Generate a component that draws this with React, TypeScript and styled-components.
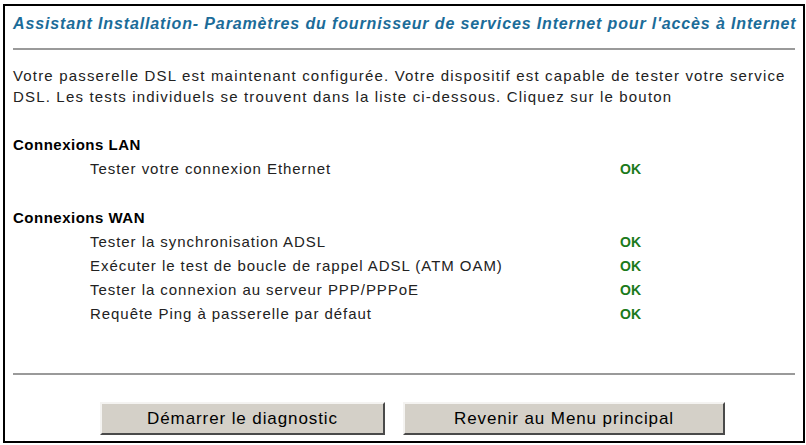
import styled, { createGlobalStyle } from 'styled-components'

const GlobalStyle = createGlobalStyle`
  html, body {
    margin: 0;
    padding: 0;
    background: #fff;
  }
  body {
    font-family: 'Liberation Sans', Arial, sans-serif;
  }
`

const Frame = styled.div`
  box-sizing: border-box;
  margin: 4px 0 0 3px;
  width: 802px;
  height: 439px;
  border: 2px solid #000;
  padding: 0 8px;
  background: #fff;
`

const Title = styled.h1`
  margin: 9px 0 0;
  font-size: 16px;
  line-height: 18px;
  letter-spacing: 0.86px;
  font-weight: bold;
  font-style: italic;
  color: #1b6c99;
  white-space: nowrap;
`

const Rule = styled.hr<{ $top: number }>`
  margin: ${(p) => p.$top}px 0 0;
  border: none;
  height: 2px;
  background: #9a9a9a;
`

const Intro = styled.p`
  margin: 15px 0 0;
  font-size: 15px;
  line-height: 21px;
  letter-spacing: 1.17px;
  color: #222;
  white-space: nowrap;
`

const Section = styled.section<{ $top: number }>`
  margin-top: ${(p) => p.$top}px;
`

const Heading = styled.h2`
  margin: 0;
  font-size: 15px;
  line-height: 24px;
  letter-spacing: 0.5px;
  font-weight: bold;
  color: #000;
`

const TestRow = styled.div`
  display: grid;
  grid-template-columns: 77px 530px auto;
  font-size: 15px;
  line-height: 24px;
  color: #222;
`

const Label = styled.span`
  grid-column: 2;
  letter-spacing: 0.95px;
  white-space: nowrap;
`

const Status = styled.span`
  grid-column: 3;
  font-size: 14px;
  font-weight: bold;
  color: #1b7a1b;
`

const Actions = styled.div`
  display: flex;
  gap: 18px;
  margin: 27px 0 0 87px;
`

const Button = styled.button<{ $width: number }>`
  box-sizing: border-box;
  width: ${(p) => p.$width}px;
  height: 33px;
  font-family: 'Liberation Sans', Arial, sans-serif;
  font-size: 17px;
  letter-spacing: 0.9px;
  color: #000;
  background: #d4d0c8;
  border: 2px solid;
  border-color: #f4f3f1 #4a4a4a #4a4a4a #f4f3f1;
  padding: 0;
  cursor: pointer;
`

const lanTests = ['Tester votre connexion Ethernet']

const wanTests = [
  'Tester la synchronisation ADSL',
  'Exécuter le test de boucle de rappel ADSL (ATM OAM)',
  'Tester la connexion au serveur PPP/PPPoE',
  'Requête Ping à passerelle par défaut',
]

const App = () => (
  <>
    <GlobalStyle />
    <Frame>
      <Title>
        Assistant Installation- Paramètres du fournisseur de services Internet pour l'accès à Internet
      </Title>
      <Rule $top={15} />
      <Intro>
        Votre passerelle DSL est maintenant configurée. Votre dispositif est capable de tester votre service
        <br />
        DSL. Les tests individuels se trouvent dans la liste ci-dessous. Cliquez sur le bouton
      </Intro>
      <Section $top={26}>
        <Heading>Connexions LAN</Heading>
        {lanTests.map((t) => (
          <TestRow key={t}>
            <Label>{t}</Label>
            <Status>OK</Status>
          </TestRow>
        ))}
      </Section>
      <Section $top={25}>
        <Heading>Connexions WAN</Heading>
        {wanTests.map((t) => (
          <TestRow key={t}>
            <Label>{t}</Label>
            <Status>OK</Status>
          </TestRow>
        ))}
      </Section>
      <Rule $top={47} />
      <Actions>
        <Button $width={285}>Démarrer le diagnostic</Button>
        <Button $width={322}>Revenir au Menu principal</Button>
      </Actions>
    </Frame>
  </>
)

export default App
